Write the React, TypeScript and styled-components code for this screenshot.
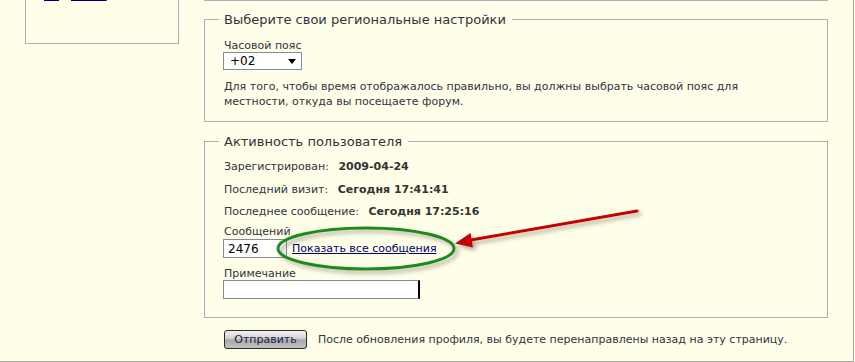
import React from "react";
import styled, { createGlobalStyle } from "styled-components";

const Global = createGlobalStyle`
  html, body { margin: 0; padding: 0; background: #fefee9; }
  body {
    font-family: "DejaVu Sans", Verdana, sans-serif;
    font-size: 11px;
    color: #333340;
    overflow: hidden;
  }
`;

const Page = styled.div`
  position: relative;
  display: flex;
  width: 854px;
  height: 362px;
  box-sizing: border-box;
  border-right: 1px solid #a8aaa8;
  border-bottom: 1px solid #a8aaa8;
  overflow: hidden;
`;

const Sidebar = styled.aside`
  width: 204px;
  flex: none;
`;

const SideBox = styled.div`
  box-sizing: border-box;
  margin: -24px 0 0 25px;
  width: 154px;
  height: 68px;
  border: 1px solid #a9b0b8;
  padding: 11px 0 0 18px;
  line-height: 13px;
`;

const SideLink = styled.a`
  font-weight: bold;
  color: #000070;
  text-decoration: underline;
  text-decoration-thickness: 2px;
`;

const Main = styled.main`
  width: 624px;
  flex: none;
  display: flex;
  flex-direction: column;
`;

const PrevEdge = styled.div`
  height: 0;
  border-top: 1px solid #a9b0b8;
`;

const Fieldset = styled.fieldset<{ $mt: number; $pb: number }>`
  margin: ${(p) => p.$mt}px 0 0;
  padding: 0 19px ${(p) => p.$pb}px;
  border: 1px solid #a9b0b8;
  min-width: 0;
`;

const Legend = styled.legend`
  margin-left: -5px;
  padding: 0 6px 0 5px;
  font-size: 13px;
  line-height: 17px;
  color: #333340;
`;

const Body = styled.div<{ $pt: number }>`
  padding-top: ${(p) => p.$pt}px;
  display: flex;
  flex-direction: column;
  align-items: flex-start;
`;

const FieldLabel = styled.div<{ $mt?: number }>`
  margin-top: ${(p) => p.$mt ?? 0}px;
  line-height: 12px;
`;

const SelectBox = styled.div`
  box-sizing: border-box;
  width: 79px;
  height: 18px;
  margin-left: -1px;
  border: 1px solid #7f8c99;
  background: #fff;
  display: flex;
  align-items: center;
  justify-content: space-between;
  padding: 0 5px 0 6px;
  color: #000;
  font-size: 12px;
`;

const Caret = styled.span`
  width: 0;
  height: 0;
  border-left: 4px solid transparent;
  border-right: 4px solid transparent;
  border-top: 5px solid #000;
`;

const Help = styled.p`
  margin: 9px 0 0;
  line-height: 15px;
`;

const InfoRow = styled.div`
  line-height: 13px;
  margin-bottom: 9.5px;
`;

const Value = styled.b`
  margin-left: 6px;
  color: #333;
`;

const InputRow = styled.div<{ $mt: number }>`
  margin-top: ${(p) => p.$mt}px;
  margin-left: -1px;
  display: flex;
  align-items: center;
  gap: 5px;
`;

const TextInput = styled.div<{ $w: number; $focus?: boolean }>`
  box-sizing: border-box;
  width: ${(p) => p.$w}px;
  height: 19px;
  border: 1px solid #7f8c99;
  border-right: ${(p) => (p.$focus ? "2px solid #000" : "1px solid #7f8c99")};
  background: #fff;
  padding: 0 4px;
  display: flex;
  align-items: center;
  color: #000;
  font-size: 12px;
`;

const Link = styled.a`
  color: #000070;
  text-decoration: underline;
  line-height: 13px;
`;

const ButtonRow = styled.div`
  margin-top: 12px;
  padding-left: 20px;
  display: flex;
  align-items: center;
  gap: 11px;
`;

const Button = styled.button`
  box-sizing: border-box;
  width: 83px;
  height: 19px;
  padding: 0;
  border: 1px solid #2a2a2a;
  border-radius: 3px;
  background: linear-gradient(#f2f2f2 0%, #d6d6d6 40%, #a9a9a9 55%, #c4c4c4 100%);
  font-family: "DejaVu Sans", Verdana, sans-serif;
  font-size: 11px;
  color: #1b1b4b;
`;

const Note = styled.span`
  line-height: 13px;
`;

const Overlay = styled.svg`
  position: absolute;
  left: 0;
  top: 0;
  pointer-events: none;
`;

export default function App() {
  return (
    <>
      <Global />
      <Page>
        <Sidebar>
          <SideBox>
            <SideLink href="#">Подписки</SideLink>
          </SideBox>
        </Sidebar>
        <Main>
          <PrevEdge />
          <Fieldset $mt={10} $pb={12}>
            <Legend>Выберите свои региональные настройки</Legend>
            <Body $pt={12}>
              <FieldLabel>Часовой пояс</FieldLabel>
              <SelectBox>
                <span>+02</span>
                <Caret />
              </SelectBox>
              <Help>
                Для того, чтобы время отображалось правильно, вы должны выбрать часовой пояс для
                <br />
                местности, откуда вы посещаете форум.
              </Help>
            </Body>
          </Fieldset>
          <Fieldset $mt={11} $pb={18}>
            <Legend>Активность пользователя</Legend>
            <Body $pt={10}>
              <InfoRow>
                Зарегистрирован: <Value>2009-04-24</Value>
              </InfoRow>
              <InfoRow>
                Последний визит: <Value>Сегодня 17:41:41</Value>
              </InfoRow>
              <InfoRow>
                Последнее сообщение: <Value>Сегодня 17:25:16</Value>
              </InfoRow>
              <FieldLabel $mt={-1.5}>Сообщений</FieldLabel>
              <InputRow $mt={1}>
                <TextInput $w={64}>2476</TextInput>
                <Link href="#">Показать все сообщения</Link>
              </InputRow>
              <FieldLabel $mt={10}>Примечание</FieldLabel>
              <InputRow $mt={0}>
                <TextInput $w={197} $focus />
              </InputRow>
            </Body>
          </Fieldset>
          <ButtonRow>
            <Button type="button">Отправить</Button>
            <Note>После обновления профиля, вы будете перенаправлены назад на эту страницу.</Note>
          </ButtonRow>
        </Main>
        <Overlay width="855" height="362" viewBox="0 0 855 362">
          <defs>
            <filter id="sh" x="-20%" y="-40%" width="140%" height="180%">
              <feDropShadow dx="3" dy="3" stdDeviation="2" floodColor="#6b6b5a" floodOpacity="0.55" />
            </filter>
          </defs>
          <ellipse cx="366" cy="248.5" rx="88" ry="20.5" fill="none" stroke="#1f8a1f" strokeWidth="3" filter="url(#sh)" />
          <g filter="url(#sh)">
            <line x1="637" y1="211" x2="468" y2="240.5" stroke="#c40000" strokeWidth="3" strokeLinecap="round" />
            <polygon points="455,243.5 470.5,233 473,247.5" fill="#c40000" />
          </g>
        </Overlay>
      </Page>
    </>
  );
}
